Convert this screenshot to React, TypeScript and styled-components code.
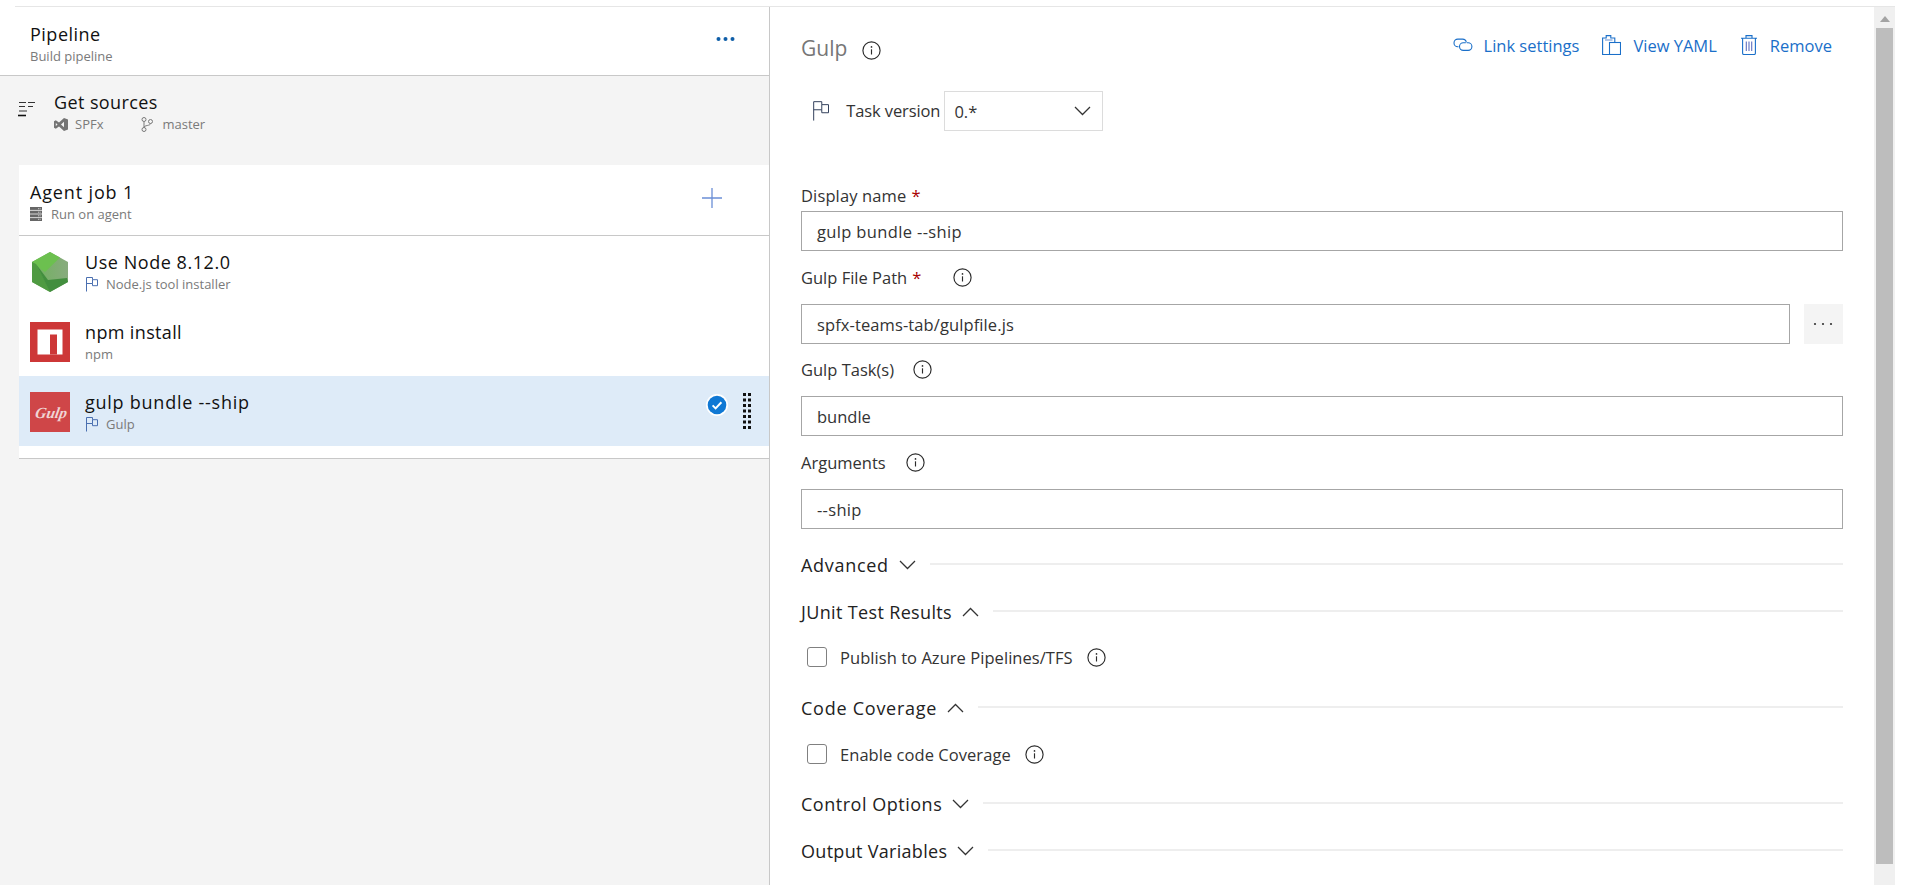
import React from "react";
import styled, { createGlobalStyle } from "styled-components";

const Global = createGlobalStyle`
  html, body { margin: 0; padding: 0; background: #fff; overflow: hidden; }
  body { font-family: "Open Sans", "Noto Sans", "Liberation Sans", sans-serif; color: #222; }
  * { box-sizing: border-box; }
`;

const Page = styled.div`
  width: 1895px;
  height: 885px;
  display: flex;
  flex-direction: column;
`;
const TopStrip = styled.div`
  height: 7px;
  margin-left: 15px;
  border-bottom: 1px solid #e6e6e6;
  flex: none;
`;
const Main = styled.div`
  flex: 1;
  display: flex;
  min-height: 0;
`;

/* Left column */
const LeftPanel = styled.div`
  width: 770px;
  flex: none;
  background: #f4f4f4;
  border-right: 1px solid #c8c8c8;
`;
const PipelineHeader = styled.div`
  height: 69px;
  background: #fff;
  border-bottom: 1px solid #c8c8c8;
  display: flex;
  justify-content: space-between;
  padding: 15px 34px 0 30px;
`;
const Title = styled.div<{ $ls: number }>`
  font-size: 18px;
  line-height: 24px;
  height: 24px;
  color: #111;
  letter-spacing: ${(p) => p.$ls}px;
  white-space: nowrap;
`;
const SubLine = styled.div`
  display: flex;
  align-items: center;
  height: 16px;
  margin-top: 2px;
  font-size: 13px;
  line-height: 16px;
  color: #7a7a7a;
  white-space: nowrap;
`;
const DotsButton = styled.div`
  margin-top: 14px;
  height: 6px;
  display: flex;
`;
const SourceSection = styled.div`
  height: 89px;
  display: flex;
  padding: 14px 0 0 18px;
`;
const SourceIcon = styled.div`
  width: 17px;
  margin-top: 10px;
  margin-right: 19px;
  flex: none;
`;
const JobPanel = styled.div`
  margin-left: 19px;
  background: #fff;
  border-bottom: 1px solid #c8c8c8;
  padding-bottom: 12px;
`;
const JobHeader = styled.div`
  height: 71px;
  border-bottom: 1px solid #c8c8c8;
  display: flex;
  justify-content: space-between;
  padding: 15px 47px 0 11px;
`;
const PlusSlot = styled.div`
  margin-top: 8px;
`;
const TaskRow = styled.div<{ $selected?: boolean }>`
  height: 70px;
  display: flex;
  padding: 16px 18px 0 11px;
  background: ${(p) => (p.$selected ? "#deebf8" : "#fff")};
`;
const TaskIcon = styled.div`
  width: 40px;
  height: 40px;
  flex: none;
  margin-right: 15px;
`;
const TaskText = styled.div`
  margin-top: -2px;
`;
const TaskEnd = styled.div`
  margin-left: auto;
  display: flex;
  align-items: flex-start;
  gap: 15px;
`;
const CheckSlot = styled.div`
  margin-top: 2px;
  height: 22px;
`;
const FlagSlot = styled.span`
  display: inline-flex;
  margin-left: 1px;
  margin-right: 8px;
  margin-top: 1px;
`;

/* Right column */
const RightPanel = styled.div`
  flex: 1;
  padding: 0 31px;
  min-width: 0;
`;
const TitleRow = styled.div`
  height: 80px;
  display: flex;
  align-items: center;
`;
const TaskName = styled.div`
  font-size: 21px;
  color: #767676;
  margin-top: 1px;
`;
const TitleInfo = styled.span`
  display: inline-flex;
  margin-left: 15px;
  margin-top: 6px;
`;
const Actions = styled.div`
  margin-left: auto;
  margin-right: 11px;
  margin-top: -4px;
  display: flex;
  align-items: center;
`;
const Action = styled.div<{ $ml?: number; $gap: number }>`
  display: flex;
  align-items: center;
  gap: ${(p) => p.$gap}px;
  margin-left: ${(p) => p.$ml ?? 0}px;
  color: #1a6fc9;
  font-size: 16.5px;
  white-space: nowrap;
`;
const VersionRow = styled.div`
  margin-top: 4px;
  height: 40px;
  padding-left: 12px;
  display: flex;
  align-items: center;
`;
const VersionLabel = styled.div`
  margin-left: 17px;
  margin-right: 4px;
  font-size: 16.5px;
  color: #333;
  letter-spacing: -0.1px;
  white-space: nowrap;
  margin-top: -2px;
`;
const Select = styled.div`
  width: 159px;
  height: 40px;
  border: 1px solid #dcdcdc;
  display: flex;
  align-items: center;
  justify-content: space-between;
  padding: 0 11px 0 9px;
  font-size: 16.5px;
  color: #333;
`;
const FieldLabel = styled.div<{ $mt: number; $ls?: number }>`
  margin-top: ${(p) => p.$mt}px;
  height: 24px;
  display: flex;
  align-items: center;
  font-size: 16.5px;
  color: #333;
  letter-spacing: ${(p) => p.$ls ?? 0}px;
  white-space: nowrap;
`;
const Star = styled.span`
  color: #a80000;
  margin-left: 5px;
`;
const LabelInfo = styled.span<{ $ml: number }>`
  display: inline-flex;
  margin-left: ${(p) => p.$ml}px;
`;
const InputRow = styled.div<{ $mt: number }>`
  margin-top: ${(p) => p.$mt}px;
  display: flex;
  gap: 14px;
`;
const InputBox = styled.div<{ $ls?: number }>`
  flex: 1;
  height: 40px;
  border: 1px solid #a6a6a6;
  padding: 1px 15px 0;
  display: flex;
  align-items: center;
  font-size: 16.5px;
  color: #333;
  letter-spacing: ${(p) => p.$ls ?? 0}px;
  white-space: nowrap;
`;
const BrowseButton = styled.div`
  width: 39px;
  height: 40px;
  background: #f4f4f4;
  display: flex;
  align-items: center;
  justify-content: center;
  padding-right: 2px;
`;
const SectionRow = styled.div<{ $mt: number }>`
  margin-top: ${(p) => p.$mt}px;
  height: 24px;
  display: flex;
  align-items: center;
`;
const SectionName = styled.div<{ $ls: number }>`
  font-size: 18px;
  color: #222;
  letter-spacing: ${(p) => p.$ls}px;
  white-space: nowrap;
`;
const SectionChevron = styled.span`
  display: inline-flex;
  margin-left: 10px;
`;
const SectionRule = styled.div`
  flex: 1;
  height: 2px;
  margin-left: 14px;
  margin-top: -2px;
  background: #eeeeee;
`;
const CheckRow = styled.div<{ $mt: number }>`
  margin-top: ${(p) => p.$mt}px;
  height: 24px;
  display: flex;
  align-items: center;
  padding-left: 6px;
`;
const Box = styled.div`
  width: 20px;
  height: 20px;
  border: 1px solid #808080;
  border-radius: 3px;
  flex: none;
`;
const CheckLabel = styled.div`
  margin-left: 13px;
  margin-right: 14px;
  font-size: 16.5px;
  color: #333;
  letter-spacing: 0.05px;
  white-space: nowrap;
`;

/* Scrollbar */
const ScrollTrack = styled.div`
  width: 21px;
  flex: none;
  background: #f0f0f0;
  display: flex;
  flex-direction: column;
  align-items: center;
  padding: 9px 2px 21px;
`;
const ScrollArrow = styled.div`
  width: 0;
  height: 0;
  border-left: 5.5px solid transparent;
  border-right: 5.5px solid transparent;
  border-bottom: 6px solid #a3a3a3;
  margin-bottom: 6px;
`;
const ScrollThumb = styled.div`
  flex: 1;
  width: 17px;
  background: #bdbdbd;
`;

/* Icons */
const InfoIcon = () => (
  <svg width="19" height="19" viewBox="0 0 19 19" fill="none">
    <circle cx="9.5" cy="9.5" r="8.6" stroke="#2b2b2b" strokeWidth="1.15" />
    <circle cx="9.5" cy="5.9" r="0.85" fill="#2b2b2b" />
    <path d="M9.5 8.3v5.2" stroke="#2b2b2b" strokeWidth="1.15" />
  </svg>
);
const Chevron = ({ up, size = 17, color = "#333" }: { up?: boolean; size?: number; color?: string }) => (
  <svg width={size} height="10" viewBox="0 0 17 10" fill="none">
    <path d={up ? "M1 9l7.5-7.5L16 9" : "M1 1l7.5 7.5L16 1"} stroke={color} strokeWidth="1.25" />
  </svg>
);
const FlagIcon = ({ color = "#4a6fb0", scale = 1 }: { color?: string; scale?: number }) => (
  <svg width={12 * scale} height={15 * scale} viewBox="0 0 12 15" fill="none">
    <path d="M.5 14.5V.5h6v2.2h5v6h-5V6.5h-6M6.5 2.7v3.8" stroke={color} strokeWidth={1 / scale} />
  </svg>
);
const GetSourcesIcon = () => (
  <svg width="17" height="15" viewBox="0 0 17 15" fill="none" stroke="#333" strokeWidth="1">
    <path d="M1 .5h7M10 .5h7M1 4.5h6M10 4.5h5M1 9h8" />
    <path d="M0 13.5h8" stroke="#111" strokeWidth="1.6" />
  </svg>
);
const VsIcon = () => (
  <svg width="14" height="13" viewBox="0 0 14 13" style={{ marginRight: 7 }}>
    <path
      fillRule="evenodd"
      fill="#747474"
      d="M10 0l4 1.6v9.8L10 13 5 8.4 1.8 10.8 0 9.8V3.2l1.8-1L5 4.6 10 0zM10 3.8L7 6.5l3 2.7V3.8zM1.8 4.9v3.2L3.6 6.5 1.8 4.9z"
    />
  </svg>
);
const BranchIcon = () => (
  <svg width="12" height="15" viewBox="0 0 12 15" fill="none" stroke="#7a7a7a" strokeWidth="1" style={{ marginLeft: 38, marginRight: 9 }}>
    <circle cx="3" cy="2.5" r="2" />
    <circle cx="3" cy="12.5" r="2" />
    <circle cx="9.5" cy="4.5" r="2" />
    <path d="M3 4.5v6M9.5 6.5c0 2.5-6.5 1.5-6.5 4" />
  </svg>
);
const ServerIcon = () => (
  <svg width="12" height="14" viewBox="0 0 12 14" style={{ marginRight: 9 }}>
    <rect width="12" height="14" fill="#666" />
    <path d="M0 3.4h12M0 7h12M0 10.6h12" stroke="#f4f4f4" strokeWidth="0.8" />
    <path d="M8 1.7h3M8 5.2h3M8 8.8h3M8 12.3h3" stroke="#d9d9d9" strokeWidth="0.9" strokeDasharray="1 .6" />
  </svg>
);
const MoreDots = () => (
  <svg width="19" height="6" viewBox="0 0 19 6" fill="#0f5ea8">
    <circle cx="2.5" cy="3" r="2" />
    <circle cx="9.5" cy="3" r="2" />
    <circle cx="16.5" cy="3" r="2" />
  </svg>
);
const BrowseDots = () => (
  <svg width="20" height="4" viewBox="0 0 20 4" fill="#333">
    <circle cx="2" cy="2" r="1.1" />
    <circle cx="10" cy="2" r="1.1" />
    <circle cx="18" cy="2" r="1.1" />
  </svg>
);
const PlusIcon = () => (
  <svg width="20" height="20" viewBox="0 0 20 20" stroke="#6b8fd6" strokeWidth="1.3">
    <path d="M10 0v20M0 10h20" />
  </svg>
);
const NodeIcon = () => (
  <svg width="40" height="40" viewBox="0 0 40 40">
    <defs>
      <linearGradient id="nodeRight" x1="0" y1="0" x2="1" y2="0">
        <stop offset="0" stopColor="#6fb25c" />
        <stop offset="1" stopColor="#88ab7e" />
      </linearGradient>
    </defs>
    <polygon points="20,0 38,10 38,30 20,40 2,30 2,10" fill="url(#nodeRight)" />
    <polygon points="20,0 2,10 5,13 15,20 30,5.6" fill="#6cc04f" />
    <polygon points="2,10 2,30 20,40 19,37 6,12" fill="#4f9a42" />
    <polygon points="6,12 20,40 38,30 37,26 18,28" fill="#428e3e" />
  </svg>
);
const NpmIcon = () => (
  <svg width="40" height="40" viewBox="0 0 40 40">
    <rect width="40" height="40" fill="#cd3737" />
    <rect x="7.5" y="7.5" width="25" height="25" fill="#fff" />
    <rect x="20" y="12.5" width="7" height="20" fill="#cd3737" />
  </svg>
);
const GulpIcon = () => (
  <svg width="40" height="40" viewBox="0 0 40 40">
    <rect width="40" height="40" fill="#cf4648" />
    <text x="20" y="26" textAnchor="middle" transform="skewX(-10) translate(5 0)" fontFamily="Liberation Serif, serif" fontStyle="italic" fontWeight="700" fontSize="15.5" fill="#f0d4d4">
      Gulp
    </text>
  </svg>
);
const SelectedIcon = () => (
  <svg width="22" height="22" viewBox="0 0 22 22" fill="none">
    <circle cx="11" cy="11" r="11" fill="#fff" />
    <circle cx="11" cy="11" r="9.3" fill="#0f78d4" />
    <path d="M6.6 11.4l3 3 5.8-6.2" stroke="#fff" strokeWidth="2" />
  </svg>
);
const GripIcon = () => (
  <svg width="8" height="36" viewBox="0 0 8 36" fill="#111" style={{ marginTop: 1 }}>
    {[0, 1, 2, 3, 4, 5, 6].map((r) => (
      <g key={r}>
        <rect x="0" y={r * 5.5} width="3" height="3" />
        <rect x="5" y={r * 5.5} width="3" height="3" />
      </g>
    ))}
  </svg>
);
const LinkIcon = () => (
  <svg width="20" height="14" viewBox="0 0 20 14" fill="none" stroke="#1a6fc9" strokeWidth="1.1">
    <path d="M5.5 8.7H4.8a3.8 3.8 0 0 1 0-7.6h4.8a3.8 3.8 0 0 1 3.7 3.2" />
    <path d="M13.8 4.8h1.3a3.8 3.8 0 0 1 0 7.6h-4.8a3.8 3.8 0 0 1-3.8-3.8 3.8 3.8 0 0 1 3.8-3.8h2.5" />
  </svg>
);
const ClipboardIcon = () => (
  <svg width="19" height="20" viewBox="0 0 19 20" fill="none" stroke="#1a6fc9" strokeWidth="1.1">
    <path d="M7.5 19.5H.6V3h3.6V.6h4.6V3h4v4.5" />
    <path d="M3 5h7.5" stroke="#6f97d8" />
    <rect x="7.5" y="7.5" width="11" height="12" fill="#fff" />
  </svg>
);
const TrashIcon = () => (
  <svg width="16" height="20" viewBox="0 0 16 20" fill="none" stroke="#1a6fc9" strokeWidth="1.1">
    <path d="M0 3.2h16M5 3.2V.6h6v2.6M1.6 3.2v15c0 .8.5 1.3 1.3 1.3h10.2c.8 0 1.3-.5 1.3-1.3v-15" />
    <path d="M5.3 6.5v9.5M8 6.5v9.5M10.7 6.5v9.5" stroke="#5f6fc0" />
  </svg>
);

const tasks = [
  { name: "Use Node 8.12.0", ls: 0.55, kind: "Node.js tool installer", flag: true, icon: <NodeIcon /> },
  { name: "npm install", ls: 0.36, kind: "npm", flag: false, icon: <NpmIcon /> },
  { name: "gulp bundle --ship", ls: 0.75, kind: "Gulp", flag: true, icon: <GulpIcon />, selected: true },
];

const sections: { name: string; ls: number; up?: boolean; mt: number; check?: { label: string; mt: number } }[] = [
  { name: "Advanced", ls: 0.7, mt: 24 },
  { name: "JUnit Test Results", ls: 0.35, up: true, mt: 23, check: { label: "Publish to Azure Pipelines/TFS", mt: 21 } },
  { name: "Code Coverage", ls: 0.75, up: true, mt: 27, check: { label: "Enable code Coverage", mt: 22 } },
  { name: "Control Options", ls: 0.52, mt: 26 },
  { name: "Output Variables", ls: 0.3, mt: 23 },
];

export default function App() {
  return (
    <Page>
      <Global />
      <TopStrip />
      <Main>
        <LeftPanel>
          <PipelineHeader>
            <div>
              <Title $ls={0.5}>Pipeline</Title>
              <SubLine>Build pipeline</SubLine>
            </div>
            <DotsButton>
              <MoreDots />
            </DotsButton>
          </PipelineHeader>
          <SourceSection>
            <SourceIcon>
              <GetSourcesIcon />
            </SourceIcon>
            <div>
              <Title $ls={0.4}>Get sources</Title>
              <SubLine>
                <VsIcon />
                SPFx
                <BranchIcon />
                master
              </SubLine>
            </div>
          </SourceSection>
          <JobPanel>
            <JobHeader>
              <div>
                <Title $ls={0.85}>Agent job 1</Title>
                <SubLine>
                  <ServerIcon />
                  Run on agent
                </SubLine>
              </div>
              <PlusSlot>
                <PlusIcon />
              </PlusSlot>
            </JobHeader>
            {tasks.map((t) => (
              <TaskRow key={t.name} $selected={t.selected}>
                <TaskIcon>{t.icon}</TaskIcon>
                <TaskText>
                  <Title $ls={t.ls}>{t.name}</Title>
                  <SubLine>
                    {t.flag && (
                      <FlagSlot>
                        <FlagIcon />
                      </FlagSlot>
                    )}
                    {t.kind}
                  </SubLine>
                </TaskText>
                {t.selected && (
                  <TaskEnd>
                    <CheckSlot>
                      <SelectedIcon />
                    </CheckSlot>
                    <GripIcon />
                  </TaskEnd>
                )}
              </TaskRow>
            ))}
          </JobPanel>
        </LeftPanel>
        <RightPanel>
          <TitleRow>
            <TaskName>Gulp</TaskName>
            <TitleInfo>
              <InfoIcon />
            </TitleInfo>
            <Actions>
              <Action $gap={11}>
                <LinkIcon />
                Link settings
              </Action>
              <Action $gap={12} $ml={23}>
                <ClipboardIcon />
                View YAML
              </Action>
              <Action $gap={13} $ml={24}>
                <TrashIcon />
                Remove
              </Action>
            </Actions>
          </TitleRow>
          <VersionRow>
            <FlagIcon color="#33415c" scale={1.35} />
            <VersionLabel>Task version</VersionLabel>
            <Select>
              0.*
              <Chevron />
            </Select>
          </VersionRow>
          <FieldLabel $mt={52} $ls={0.13}>
            Display name<Star>*</Star>
          </FieldLabel>
          <InputRow $mt={4}>
            <InputBox $ls={0.35}>gulp bundle --ship</InputBox>
          </InputRow>
          <FieldLabel $mt={14}>
            Gulp File Path<Star>*</Star>
            <LabelInfo $ml={32}>
              <InfoIcon />
            </LabelInfo>
          </FieldLabel>
          <InputRow $mt={15}>
            <InputBox $ls={0.1}>spfx-teams-tab/gulpfile.js</InputBox>
            <BrowseButton>
              <BrowseDots />
            </BrowseButton>
          </InputRow>
          <FieldLabel $mt={13}>
            Gulp Task(s)
            <LabelInfo $ml={19}>
              <InfoIcon />
            </LabelInfo>
          </FieldLabel>
          <InputRow $mt={15}>
            <InputBox>bundle</InputBox>
          </InputRow>
          <FieldLabel $mt={14}>
            Arguments
            <LabelInfo $ml={20}>
              <InfoIcon />
            </LabelInfo>
          </FieldLabel>
          <InputRow $mt={15}>
            <InputBox $ls={0.3}>--ship</InputBox>
          </InputRow>
          {sections.map((s) => (
            <React.Fragment key={s.name}>
              <SectionRow $mt={s.mt}>
                <SectionName $ls={s.ls}>{s.name}</SectionName>
                <SectionChevron>
                  <Chevron up={s.up} />
                </SectionChevron>
                <SectionRule />
              </SectionRow>
              {s.check && (
                <CheckRow $mt={s.check.mt}>
                  <Box />
                  <CheckLabel>{s.check.label}</CheckLabel>
                  <InfoIcon />
                </CheckRow>
              )}
            </React.Fragment>
          ))}
        </RightPanel>
        <ScrollTrack>
          <ScrollArrow />
          <ScrollThumb />
        </ScrollTrack>
      </Main>
    </Page>
  );
}
